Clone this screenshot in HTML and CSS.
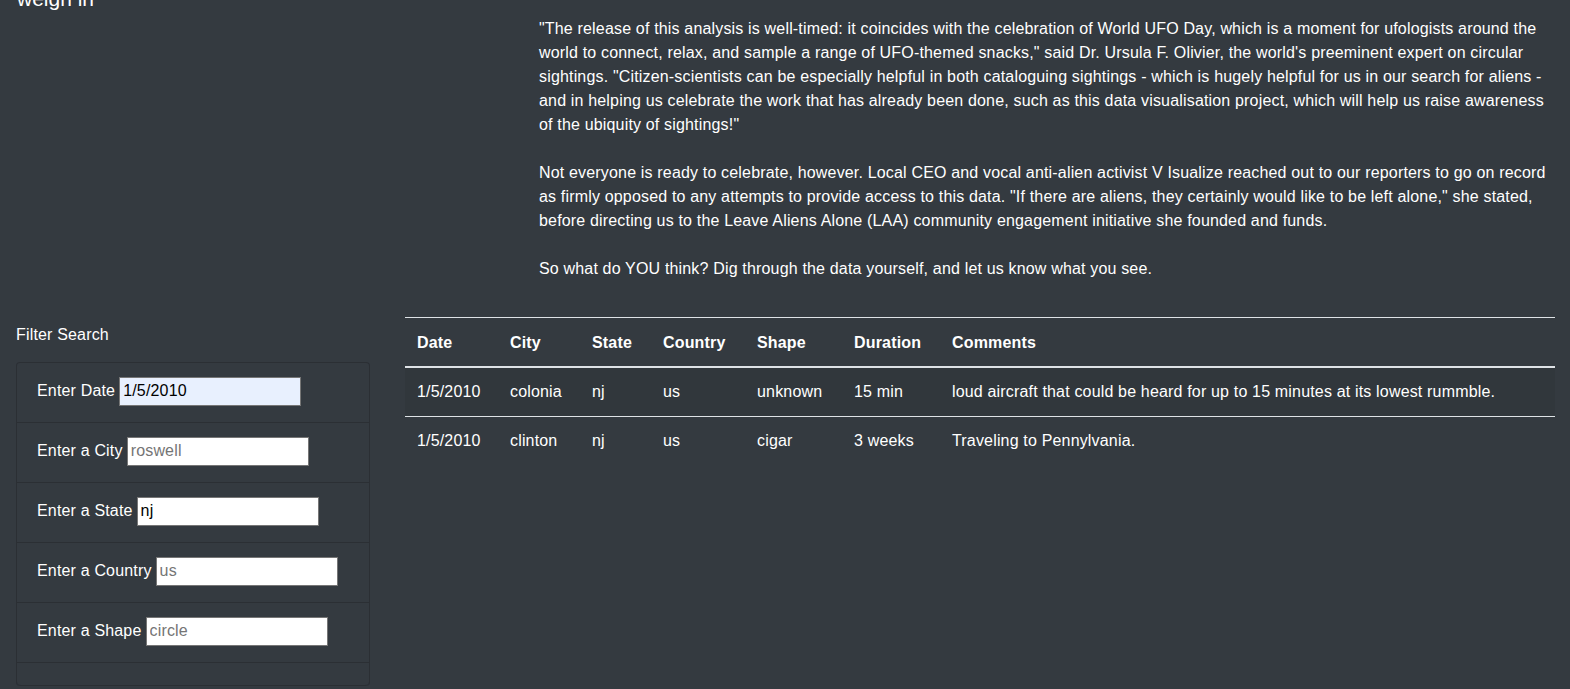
FILE: index.html
```html
<!DOCTYPE html>
<html lang="en">
<head>
<meta charset="utf-8">
<title>UFO Sightings</title>
<link rel="stylesheet" href="styles.css">
</head>
<body>
<div class="page">
  <section class="intro">
    <div class="intro-side">
      <h3 class="intro-title">weigh in</h3>
    </div>
    <div class="intro-main">
      <p>"The release of this analysis is well-timed: it coincides with the celebration of World UFO Day, which is a moment for ufologists around the world to connect, relax, and sample a range of UFO-themed snacks," said Dr. Ursula F. Olivier, the world's preeminent expert on circular sightings. "Citizen-scientists can be especially helpful in both cataloguing sightings - which is hugely helpful for us in our search for aliens - and in helping us celebrate the work that has already been done, such as this data visualisation project, which will help us raise awareness of the ubiquity of sightings!"</p>
      <p>Not everyone is ready to celebrate, however. Local CEO and vocal anti-alien activist V Isualize reached out to our reporters to go on record as firmly opposed to any attempts to provide access to this data. "If there are aliens, they certainly would like to be left alone," she stated, before directing us to the Leave Aliens Alone (LAA) community engagement initiative she founded and funds.</p>
      <p>So what do YOU think? Dig through the data yourself, and let us know what you see.</p>
    </div>
  </section>

  <section class="data">
    <aside class="filters">
      <div class="filters-title">Filter Search</div>
      <ul class="filter-list">
        <li class="filter-item"><label class="filter-label" for="datetime">Enter Date</label><input class="filter-input autofilled" id="datetime" type="text" value="1/5/2010"></li>
        <li class="filter-item"><label class="filter-label" for="city">Enter a City</label><input class="filter-input" id="city" type="text" placeholder="roswell"></li>
        <li class="filter-item"><label class="filter-label" for="state">Enter a State</label><input class="filter-input" id="state" type="text" value="nj"></li>
        <li class="filter-item"><label class="filter-label" for="country">Enter a Country</label><input class="filter-input" id="country" type="text" placeholder="us"></li>
        <li class="filter-item"><label class="filter-label" for="shape">Enter a Shape</label><input class="filter-input" id="shape" type="text" placeholder="circle"></li>
        <li class="filter-item filter-empty"></li>
      </ul>
    </aside>

    <div class="results">
      <table class="ufo-table">
        <colgroup>
          <col class="c-date"><col class="c-city"><col class="c-state"><col class="c-country"><col class="c-shape"><col class="c-duration"><col class="c-comments">
        </colgroup>
        <thead>
          <tr><th>Date</th><th>City</th><th>State</th><th>Country</th><th>Shape</th><th>Duration</th><th>Comments</th></tr>
        </thead>
        <tbody>
          <tr class="striped"><td>1/5/2010</td><td>colonia</td><td>nj</td><td>us</td><td>unknown</td><td>15 min</td><td>loud aircraft that could be heard for up to 15 minutes at its lowest rummble.</td></tr>
          <tr><td>1/5/2010</td><td>clinton</td><td>nj</td><td>us</td><td>cigar</td><td>3 weeks</td><td>Traveling to Pennylvania.</td></tr>
        </tbody>
      </table>
    </div>
  </section>
</div>
</body>
</html>
```

FILE: styles.css
```css
* { box-sizing: border-box; }

html, body {
  margin: 0;
  padding: 0;
  background: #343a40;
  height: 100%;
  overflow: hidden;
}

body {
  color: #ffffff;
  font-family: "Liberation Sans", Arial, Helvetica, sans-serif;
  font-size: 16px;
  line-height: 24px;
  letter-spacing: 0.17px;
}

.page {
  padding: 0 15px;
}

.intro {
  display: flex;
  align-items: flex-start;
}

.intro-side {
  width: 508px;
  flex: none;
}

.intro-title {
  margin: -14px 0 0 2px;
  font-size: 21px;
  line-height: 25px;
  font-weight: 500;
  letter-spacing: 0;
}

.intro-main {
  flex: 1;
  padding: 17px 0 0 16px;
}

.intro-main p {
  margin: 0 0 24px 0;
}

.data {
  display: flex;
  align-items: flex-start;
  margin-top: 12px;
}

.filters {
  width: 375px;
  flex: none;
  padding: 6px 0 0 1px;
}

.filters-title {
  margin: 0 0 15px 0;
}

.filter-list {
  list-style: none;
  margin: 0;
  padding: 0;
  width: 354px;
  border: 1px solid #2b2f34;
  border-bottom: none;
  border-radius: 4px;
}

.filter-item {
  display: flex;
  align-items: center;
  height: 60px;
  padding: 0 20px 3px 20px;
  border-bottom: 1px solid #2b2f34;
}

.filter-empty {
  height: 23px;
  border-radius: 0 0 4px 4px;
}

.filter-label {
  color: #ffffff;
  margin-right: 4px;
}

.filter-input {
  width: 182px;
  height: 29px;
  padding: 1px 3px;
  border: 1px solid #767676;
  border-radius: 0;
  background: #ffffff;
  color: #000000;
  font-family: "Liberation Sans", Arial, Helvetica, sans-serif;
  font-size: 16px;
  letter-spacing: 0.17px;
}

.filter-input::placeholder {
  color: #757575;
}

.filter-input.autofilled {
  background: #e8f0fe;
}

.results {
  flex: 1;
  padding-left: 15px;
}

.ufo-table {
  width: 100%;
  border-collapse: collapse;
  table-layout: fixed;
  color: #ffffff;
}

.c-date { width: 93px; }
.c-city { width: 82px; }
.c-state { width: 71px; }
.c-country { width: 94px; }
.c-shape { width: 97px; }
.c-duration { width: 98px; }

.ufo-table th,
.ufo-table td {
  padding: 12px;
  text-align: left;
  vertical-align: top;
  border-top: 1px solid #dee2e6;
  white-space: nowrap;
}

.ufo-table th {
  font-weight: 700;
  padding-top: 13px;
  padding-bottom: 11px;
  border-bottom: 2px solid #dee2e6;
}

.ufo-table tbody tr:first-child td {
  border-top: none;
}

.ufo-table tr.striped td {
  background: rgba(0, 0, 0, 0.05);
}
```
